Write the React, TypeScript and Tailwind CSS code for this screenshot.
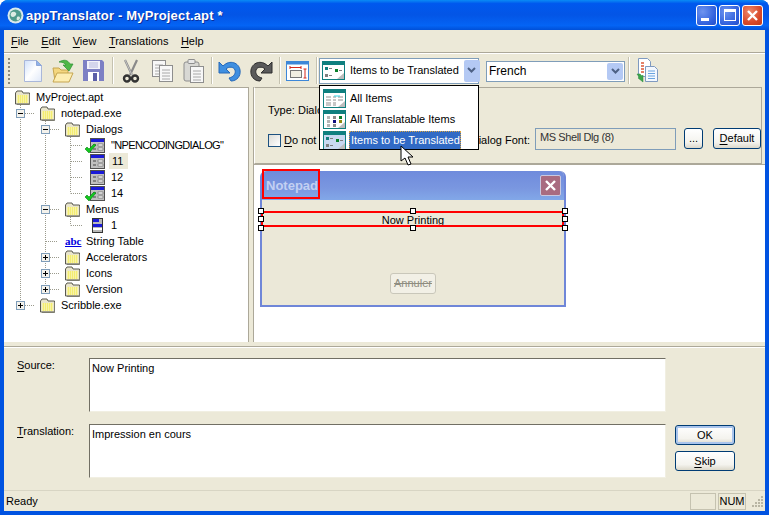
import type { ReactNode } from "react"

const ui = "font-['Liberation_Sans',Arial,sans-serif] text-[11px] leading-none text-black"

function Doc() {
  return (
    <svg width="18" height="22" viewBox="0 0 18 22">
      <defs>
        <linearGradient id="docFill" x1="0" y1="0" x2="1" y2="1">
          <stop offset="0" stopColor="#cfe0fb" />
          <stop offset="0.5" stopColor="#ffffff" />
          <stop offset="1" stopColor="#dfe8f8" />
        </linearGradient>
      </defs>
      <path d="M.5.5h12l5 5v16H.5z" fill="url(#docFill)" stroke="#a9b7da" />
      <path d="M12.5.5v5h5z" fill="#8fb3ea" stroke="#8ea6d8" />
    </svg>
  )
}

function OpenFolder() {
  return (
    <svg width="22" height="24" viewBox="0 0 22 24">
      <path d="M1 9h6l2 2h7v11H3z" fill="#f4d77f" stroke="#c5a550" />
      <path d="M1 23l4-9h16l-4 9z" fill="#fdeeb2" stroke="#c5a550" />
      <path d="M7 3c5-3 9-2 11 2h3l-4 7-6-6h3c-1-2-4-3-7-3z" fill="#4fb848" stroke="#2e8f36" strokeWidth=".7" />
    </svg>
  )
}

function Disk() {
  return (
    <svg width="21" height="21" viewBox="0 0 21 21">
      <path d="M0 0h19l2 2v19H0z" fill="#7d80c4" />
      <rect x="4" y="1" width="13" height="8" fill="#f2f2fa" />
      <path d="M6 3h9M6 5h9M6 7h9" stroke="#b6b8de" />
      <rect x="5" y="12" width="11" height="9" fill="#ffffff" />
      <rect x="10" y="13" width="4" height="8" fill="#5c5fa8" />
    </svg>
  )
}

function Scissors() {
  return (
    <svg width="18" height="24" viewBox="0 0 18 24" fill="none">
      <path d="M3 1l7 15M15 1L8 16" stroke="#8a8a8a" strokeWidth="2.2" />
      <path d="M3 1l7 15" stroke="#d0d0d0" strokeWidth=".8" />
      <circle cx="5" cy="19.5" r="3" stroke="#333" strokeWidth="2.4" />
      <circle cx="13" cy="19.5" r="3" stroke="#333" strokeWidth="2.4" />
    </svg>
  )
}

function Sheet({ x, y, w, h }: { x: number; y: number; w: number; h: number }) {
  return (
    <g>
      <rect x={x + 0.5} y={y + 0.5} width={w} height={h} fill="#f7f7f7" stroke="#8e8e8e" />
      <path
        d={`M${x + 3} ${y + 5}h${w - 5}M${x + 3} ${y + 8}h${w - 5}M${x + 3} ${y + 11}h${w - 5}M${x + 3} ${y + 14}h${w - 5}`}
        stroke="#a8a8a8"
      />
    </g>
  )
}

function Copy() {
  return (
    <svg width="21" height="22" viewBox="0 0 21 22">
      <Sheet x={0} y={0} w={13} h={16} />
      <Sheet x={7} y={5} w={13} h={16} />
    </svg>
  )
}

function Paste() {
  return (
    <svg width="21" height="24" viewBox="0 0 21 24">
      <rect x="1" y="3" width="15" height="19" rx="2" fill="#d8d8d4" stroke="#8e8e8e" />
      <rect x="5" y="0.5" width="7" height="4" rx="1" fill="#e8e8e8" stroke="#8e8e8e" />
      <Sheet x={7} y={7} w={13} h={16} />
    </svg>
  )
}

function Curl({ color, edge, flip }: { color: string; edge: string; flip?: boolean }) {
  return (
    <svg width="23" height="22" viewBox="0 0 23 22" className={flip ? "-scale-x-100" : ""}>
      <path
        d="M1 2v11h11l-4-4c3-3 8-2 9 1 1 3-1 7-6 8l2 3c6 0 10-5 9-11C21 3 12-1 5 6z"
        fill={color}
        stroke={edge}
        strokeWidth="1"
      />
    </svg>
  )
}

function Resize() {
  return (
    <svg width="23" height="20" viewBox="0 0 23 20">
      <rect x=".5" y=".5" width="22" height="19" fill="#fff" stroke="#3d87d8" />
      <rect x="1" y="1" width="21" height="2.5" fill="#3d87d8" />
      <rect x="4.5" y="9.5" width="11" height="7" fill="#f2efe2" stroke="#777" />
      <path d="M4 6.5h11M4 5v3M15 5v3M19 8v9M17.5 8h3M17.5 17h3" stroke="#d4281c" fill="none" />
    </svg>
  )
}

function Transfer() {
  return (
    <svg width="23" height="25" viewBox="0 0 23 25">
      <path d="M2.5.5h9l3 3v15h-12z" fill="#fff" stroke="#7f9ac0" />
      <path d="M5 5h3M5 8h3M5 11h3M5 14h3" stroke="#dc5a38" strokeWidth="1.6" />
      <path d="M9.5 8.5h9l3 3v12h-12z" fill="#f3f8ff" stroke="#7f9ac0" />
      <path d="M12 13h7M12 15.5h7M12 18h7M12 20.5h7" stroke="#69a4df" />
      <path d="M7 24l-5-4 1-1-2-3h3l2 2 1-1z" fill="#3ca64a" stroke="#2f8a3c" strokeWidth=".5" />
    </svg>
  )
}

function ViewIcon({ kind, active }: { kind: "all" | "translatable" | "todo"; active?: boolean }) {
  const paper = active ? "#c9d8f0" : "#ffffff"
  return (
    <svg width="23" height="19" viewBox="0 0 23 19" className="shrink-0">
      <rect x=".5" y=".5" width="22" height="18" fill={paper} stroke="#0f7f7f" />
      <rect x="1" y="1" width="21" height="3" fill="#0f7f7f" />
      <path d="M22 12v6h-7z" fill="#bdbdbd" />
      {kind === "todo" && (
        <g>
          <rect x="3" y="6" width="3" height="3" fill="#127f7f" />
          <rect x="7" y="7" width="3" height="1" fill="#7f7f7f" />
          <rect x="13" y="8" width="3" height="3" fill="#0a7f2a" />
          <rect x="17" y="9" width="3" height="1" fill="#7f7f7f" />
          <rect x="3" y="13" width="3" height="3" fill="#7f7f7f" />
          <rect x="7" y="14" width="3" height="1" fill="#7f7f7f" />
        </g>
      )}
      {kind === "all" && (
        <g>
          <path d="M3 8h5M10 8h3M15 8h5M3 11h5M10 11h3M15 11h5M3 14h5M10 14h3M3 16h5M10 16h3" stroke="#8f8f8f" />
          <path d="M11 7h6" stroke="#35d5e8" />
        </g>
      )}
      {kind === "translatable" && (
        <g>
          <rect x="4" y="6" width="3" height="3" fill="#b5b5b5" />
          <rect x="10" y="6" width="3" height="3" fill="#8a8a8a" />
          <rect x="16" y="6" width="3" height="3" fill="#0a7f2a" />
          <rect x="4" y="10" width="3" height="3" fill="#b5b5b5" />
          <rect x="10" y="10" width="3" height="3" fill="#101080" />
          <rect x="16" y="10" width="3" height="3" fill="#8f8a10" />
          <rect x="4" y="14" width="3" height="3" fill="#b5b5b5" />
          <rect x="10" y="14" width="3" height="3" fill="#8a8a8a" />
        </g>
      )}
    </svg>
  )
}

function Underlined({ text }: { text: string }) {
  return (
    <>
      <span className="underline underline-offset-2">{text[0]}</span>
      {text.slice(1)}
    </>
  )
}

function ToolSep() {
  return <span className="mx-[4px] block h-[27px] w-[2px] shrink-0 border-r border-white bg-[#c5c2b0]" />
}

function ComboArrow({ size }: { size: string }) {
  return (
    <span className={`flex shrink-0 items-center justify-center rounded-[2px] bg-[#b4c9f4] ${size}`}>
      <svg width="9" height="7" viewBox="0 0 9 7">
        <path d="M1 1l3.5 3.5L8 1" stroke="#4d6185" strokeWidth="2" fill="none" />
      </svg>
    </span>
  )
}

function XpButton({ children, className }: { children: ReactNode; className: string }) {
  return (
    <button
      className={`flex items-center justify-center rounded-[3px] border border-[#003c74] bg-[linear-gradient(#ffffff,#f4f3ee_70%,#dcd8ca)] ${ui} ${className}`}
    >
      {children}
    </button>
  )
}

function CaptionButton({ red, children }: { red?: boolean; children: ReactNode }) {
  return (
    <span
      className={`flex h-[21px] w-[21px] items-center justify-center rounded-[3px] border border-white ${
        red
          ? "bg-[radial-gradient(circle_at_35%_30%,#ee8a6c,#d8492a_60%,#c03a18)]"
          : "bg-[radial-gradient(circle_at_30%_30%,#6d93ef,#2f5fdc_70%,#2350c8)]"
      }`}
    >
      {children}
    </span>
  )
}

type Guide = "pipe" | "branch" | "last" | "plus" | "minus" | "plusLast" | "blank"

function TreeGuide({ kind }: { kind: Guide }) {
  const box = kind === "plus" || kind === "minus" || kind === "plusLast"
  const dots = { stroke: "#9a9a8c", strokeDasharray: "1 1", fill: "none" }
  return (
    <svg width="25" height="16" viewBox="0 0 25 16" className="shrink-0">
      {kind === "pipe" && <path d="M5.5 0v16" {...dots} />}
      {kind === "branch" && <path d="M5.5 0v16M6 8.5h12" {...dots} />}
      {kind === "last" && <path d="M5.5 0v8.5M6 8.5h12" {...dots} />}
      {box && (
        <g>
          {kind === "plus" || kind === "minus" ? <path d="M5.5 0v16" {...dots} /> : <path d="M5.5 0v4" {...dots} />}
          <path d="M10 8.5h9" {...dots} />
          <rect x="1.5" y="4.5" width="8" height="8" fill="#f4f2ec" stroke="#7f9db9" />
          <path d="M3 8.5h5" stroke="#000" />
          {kind !== "minus" && <path d="M5.5 6v5" stroke="#000" />}
        </g>
      )}
    </svg>
  )
}

function TreeFolder() {
  return (
    <svg width="15" height="15" viewBox="0 0 15 15" className="shrink-0">
      <path d="M.5 14V3l1.5-2h5l1 2h6.5v11z" fill="#e9e5cc" stroke="#5a5a50" />
      <rect x="2" y="5" width="11" height="8" fill="#f3ec72" />
      <path d="M2 6h11M2 8h11M2 10h11M2 12h11" stroke="#fbfadc" strokeDasharray="1 1" />
      <path d="M14.5 4v10.5H2" stroke="#7c7c70" fill="none" />
    </svg>
  )
}

function DialogIcon({ checked }: { checked?: boolean }) {
  return (
    <span className="relative flex h-[15px] w-[15px] shrink-0">
      <svg width="15" height="15" viewBox="0 0 15 15">
        <rect x=".5" y=".5" width="14" height="14" fill="#c0c0c0" stroke="#505050" />
        <rect x="1" y="1" width="13" height="3" fill="#1a1ad8" />
        <rect x="8" y="6" width="5" height="2" fill="#fff" stroke="#444" strokeWidth=".5" />
        <rect x="8" y="10" width="5" height="2" fill="#fff" stroke="#444" strokeWidth=".5" />
        <path d="M3 7h3M3 11h3" stroke="#444" />
      </svg>
      {checked && (
        <svg width="13" height="11" viewBox="0 0 13 11" className="absolute -left-[6px] top-[5px]">
          <path d="M1 6l4 4 7-8-2-1-5 5-2-2z" fill="#12c81e" stroke="#0a7a12" strokeWidth=".6" />
        </svg>
      )}
    </span>
  )
}

function MenuIcon() {
  return (
    <svg width="15" height="15" viewBox="0 0 15 15" className="shrink-0">
      <rect x="2.5" y=".5" width="10" height="14" fill="#b8b8b8" stroke="#333" />
      <rect x="3" y="1" width="6" height="3" fill="#1a1ad8" />
      <rect x="3" y="6" width="9" height="3" fill="#1a1ad8" />
      <rect x="3" y="10" width="9" height="2" fill="#fff" />
    </svg>
  )
}

const abc = "font-['Liberation_Serif',serif] text-[11px] leading-none font-bold text-[#0000e0] underline"

const rows: { guides: Guide[]; icon: ReactNode; label: string; active?: boolean; tight?: boolean }[] = [
  { guides: [], icon: <TreeFolder />, label: "MyProject.apt" },
  { guides: ["minus"], icon: <TreeFolder />, label: "notepad.exe" },
  { guides: ["pipe", "minus"], icon: <TreeFolder />, label: "Dialogs" },
  { guides: ["pipe", "pipe", "branch"], icon: <DialogIcon checked />, label: '"NPENCODINGDIALOG"', tight: true },
  { guides: ["pipe", "pipe", "branch"], icon: <DialogIcon />, label: "11", active: true },
  { guides: ["pipe", "pipe", "branch"], icon: <DialogIcon />, label: "12" },
  { guides: ["pipe", "pipe", "last"], icon: <DialogIcon checked />, label: "14" },
  { guides: ["pipe", "minus"], icon: <TreeFolder />, label: "Menus" },
  { guides: ["pipe", "pipe", "last"], icon: <MenuIcon />, label: "1" },
  { guides: ["pipe", "branch"], icon: <span className={`w-[15px] shrink-0 ${abc}`}>abc</span>, label: "String Table" },
  { guides: ["pipe", "plus"], icon: <TreeFolder />, label: "Accelerators" },
  { guides: ["pipe", "plus"], icon: <TreeFolder />, label: "Icons" },
  { guides: ["pipe", "plusLast"], icon: <TreeFolder />, label: "Version" },
  { guides: ["plusLast"], icon: <TreeFolder />, label: "Scribble.exe" },
]

function Handle({ className }: { className: string }) {
  return <span className={`absolute h-[6px] w-[6px] border border-black bg-white ${className}`} />
}

function ViewMenuItem({ kind, label, active }: { kind: "all" | "translatable" | "todo"; label: string; active?: boolean }) {
  return (
    <div className="flex h-[21px] items-center gap-[3px] pl-[3px]">
      <ViewIcon kind={kind} active={active} />
      <span
        className={
          active
            ? "flex h-[20px] w-[112px] items-center border border-dotted border-[#d9a441] bg-[#316ac5] pl-px text-white"
            : "flex h-[20px] items-center pl-px"
        }
      >
        {label}
      </span>
    </div>
  )
}

export default function App() {
  return (
    <div className={`flex h-[515px] w-[769px] flex-col overflow-hidden rounded-t-[8px] bg-[#0053e1] ${ui}`}>
      {/* title bar */}
      <div className="flex h-[30px] shrink-0 items-center bg-[linear-gradient(#0a8bf5,#0058ee_12%,#0355e6_50%,#0464f5_85%,#0050d8)] pl-[7px] pr-[6px]">
        <svg width="17" height="17" viewBox="0 0 17 17" className="shrink-0">
          <circle cx="8.5" cy="8.5" r="8" fill="#d9e9ee" />
          <circle cx="8.5" cy="8.5" r="6" fill="#4f9a8c" />
          <path d="M4 6c2-2 4-1 5 0s-1 4-3 4-3-2-2-4zM10 10c2-1 3 0 3 1s-2 3-3 2 0-2 0-3z" fill="#dcebe3" />
        </svg>
        <span className="ml-[2px] text-[13px] font-bold tracking-[0.17px] text-white [text-shadow:1px_1px_#0a2f9c]">
          appTranslator - MyProject.apt *
        </span>
        <div className="ml-auto flex gap-[2px]">
          <CaptionButton>
            <span className="mt-[9px] mr-[4px] h-[3px] w-[8px] bg-white" />
          </CaptionButton>
          <CaptionButton>
            <span className="h-[12px] w-[12px] border border-t-[3px] border-white" />
          </CaptionButton>
          <CaptionButton red>
            <svg width="13" height="13" viewBox="0 0 13 13">
              <path d="M2 2l9 9M11 2l-9 9" stroke="#fff" strokeWidth="2.4" />
            </svg>
          </CaptionButton>
        </div>
      </div>

      <div className="relative mx-[4px] mb-[4px] flex min-h-0 flex-1 flex-col bg-[#ece9d8]">
        {/* menu */}
        <div className="flex h-[22px] shrink-0 items-center gap-[12.5px] pl-[7px]">
          {["File", "Edit", "View", "Translations", "Help"].map((m) => (
            <span key={m}>
              <Underlined text={m} />
            </span>
          ))}
        </div>

        {/* toolbar */}
        <div className="flex h-[35px] shrink-0 items-center border-t border-[#aca899] pt-px shadow-[inset_0_1px_#fff]">
          <span className="ml-[4px] mr-[14px] h-[26px] w-[2px] shrink-0 bg-[repeating-linear-gradient(#8c8a7c_0_2px,transparent_2px_4px)]" />
          <span className="mr-[10px]"><Doc /></span>
          <span className="mr-[9px]"><OpenFolder /></span>
          <Disk />
          <span className="ml-[4px]"><ToolSep /></span>
          <span className="ml-[4px]"><Scissors /></span>
          <span className="ml-[12px]"><Copy /></span>
          <span className="ml-[10px]"><Paste /></span>
          <span className="ml-[3px]"><ToolSep /></span>
          <span className="ml-[1px]"><Curl color="#3f8fe0" edge="#2668b8" /></span>
          <span className="ml-[9px]"><Curl color="#5a5a5a" edge="#2d2d2d" flip /></span>
          <span className="ml-[2px]"><ToolSep /></span>
          <span className="ml-[1px]"><Resize /></span>
          <span className="ml-[3px]"><ToolSep /></span>
          <div className="ml-[-3px] flex h-[26px] w-[160px] shrink-0 items-center gap-[5px] border border-[#7f9db9] bg-white pl-[2px] pr-px">
            <ViewIcon kind="todo" />
            <span className="flex-1 whitespace-nowrap">Items to be Translated</span>
            <ComboArrow size="h-[22px] w-[16px]" />
          </div>
          <div className="ml-[7px] mt-px flex h-[21px] w-[139px] shrink-0 items-center border border-[#7f9db9] bg-white pl-[2px] pr-px">
            <span className="flex-1 text-[12px]">French</span>
            <ComboArrow size="h-[17px] w-[16px]" />
          </div>
          <span className="ml-[-1px]"><ToolSep /></span>
          <span className="ml-[2px]"><Transfer /></span>
        </div>

        {/* tree + editor */}
        <div className="flex h-[255px] shrink-0 gap-[4px]">
          <div className="w-[245px] shrink-0 border-t border-r border-[#aca899] bg-white pl-[11px] pt-px">
            {rows.map((r) => (
              <div key={r.label} className="flex h-[16px] items-center">
                {r.guides.map((g, i) => (
                  <TreeGuide key={i} kind={g} />
                ))}
                {r.icon}
                <span
                  className={`ml-[4px] flex h-[16px] items-center whitespace-nowrap pl-[2px] ${
                    r.active ? "bg-[#ece9d8] pl-[3px] pr-[5px]" : "pr-[2px]"
                  } ${r.tight ? "tracking-[-0.65px]" : ""}`}
                >
                  {r.label}
                </span>
              </div>
            ))}
          </div>

          <div className="flex min-w-0 flex-1 flex-col border-l border-[#aca899]">
            <div className="mr-[3px] flex h-[77px] shrink-0 flex-col border border-t-[#aca899] border-r-[#aca899] border-b-[#aca899] border-l-white pl-[13px]">
              <span className="mt-[17px]">Type: Dialog</span>
              <div className="mt-[11px] flex h-[23px] items-center">
                <span className="mt-[3px] h-[13px] w-[13px] shrink-0 border border-[#1c5180] bg-[linear-gradient(135deg,#dcdcd7,#ffffff)]" />
                <span className="ml-[3px] mt-[3px] w-[187px] whitespace-nowrap">
                  <Underlined text="Do not" />
                </span>
                <span className="mt-[3px] whitespace-nowrap">Dialog Font:</span>
                <span className="ml-[5px] flex h-[22px] w-[141px] shrink-0 items-center border border-[#7f9db9] pb-[2px] pl-[4px] tracking-[-0.4px] text-[#333]">
                  MS Shell Dlg (8)
                </span>
                <XpButton className="ml-[8px] h-[21px] w-[19px] shrink-0">...</XpButton>
                <XpButton className="ml-[10px] h-[21px] w-[48px] shrink-0">
                  <Underlined text="Default" />
                </XpButton>
              </div>
            </div>
            <div className="min-h-0 flex-1 border-t border-[#aca899] bg-white pl-[6px] pt-[6px]">
              {/* edited dialog */}
              <div className="relative flex h-[136px] w-[306px] flex-col rounded-t-[6px] border-x-[2px] border-b-[2px] border-[#6f86d8] bg-[#ebe8d8]">
                <div className="flex h-[29px] shrink-0 items-center justify-between rounded-t-[5px] bg-[linear-gradient(#6f8bdc,#7a97e0_60%,#82a8e8)] pl-[4px] pr-[3px]">
                  <span className="text-[13px] font-bold text-[#c3d0f2]">Notepad</span>
                  <span className="flex h-[21px] w-[21px] items-center justify-center rounded-[2px] border border-[#c8c8e0] bg-[#a96b80]">
                    <svg width="13" height="13" viewBox="0 0 13 13">
                      <path d="M2 2l9 9M11 2l-9 9" stroke="#fff" strokeWidth="2.4" />
                    </svg>
                  </span>
                </div>
                <div className="mt-[13px] flex h-[15px] shrink-0 items-center justify-center">
                  <span>Now Printing</span>
                </div>
                <div className="mt-[45px] flex justify-center">
                  <span className="flex h-[21px] w-[46px] items-center justify-center rounded-[3px] border border-[#c9c7ba] bg-[#f2f0e6] text-[#8f8d80] line-through">
                    Annuler
                  </span>
                </div>
                {/* selection marks */}
                <span className="absolute -top-[2px] left-0 h-[30px] w-[58px] border-[2px] border-[#ff0000]" />
                <span className="absolute left-[-1px] top-[40px] h-[16px] w-[303px] border-[2px] border-[#ff0000]" />
                <Handle className="left-[-4px] top-[37px]" />
                <Handle className="left-[148px] top-[37px]" />
                <Handle className="left-[300px] top-[37px]" />
                <Handle className="left-[-4px] top-[45px]" />
                <Handle className="left-[300px] top-[45px]" />
                <Handle className="left-[-4px] top-[54px]" />
                <Handle className="left-[148px] top-[54px]" />
                <Handle className="left-[300px] top-[54px]" />
              </div>
            </div>
          </div>
        </div>

        {/* source / translation */}
        <div className="flex min-h-0 flex-1 flex-col">
          <div className="mt-[4px] h-[2px] shrink-0 border-t border-[#aca899] bg-white" />
          <div className="mt-[10px] flex h-[54px] items-start">
            <span className="ml-[13px] mt-[2px] w-[72px]"><Underlined text="Source:" /></span>
            <div className="h-full w-[577px] border border-[#716f64] border-r-[#f1efe2] border-b-[#f1efe2] bg-white pl-[2px] pt-[4px]">
              Now Printing
            </div>
          </div>
          <div className="mt-[12px] flex h-[54px] items-start">
            <span className="ml-[13px] mt-[2px] w-[72px]"><Underlined text="Translation:" /></span>
            <div className="h-full w-[577px] border border-[#716f64] border-r-[#f1efe2] border-b-[#f1efe2] bg-white pl-[2px] pt-[4px]">
              Impression en cours
            </div>
            <div className="ml-[9px] mt-[1px] flex flex-col gap-[6px]">
              <XpButton className="h-[20px] w-[60px] shadow-[inset_0_0_0_2px_#a9c4ec]">OK</XpButton>
              <XpButton className="h-[20px] w-[60px]">
                <Underlined text="Skip" />
              </XpButton>
            </div>
          </div>
        </div>

        {/* status bar */}
        <div className="flex h-[21px] shrink-0 items-center border-t border-[#d8d5c4] pl-[2px]">
          <span>Ready</span>
          <div className="ml-auto flex items-center gap-[2px]">
            <span className="h-[17px] w-[26px] border border-[#c5c2b0]" />
            <span className="flex h-[17px] w-[28px] items-center justify-center border border-[#c5c2b0]">NUM</span>
            <svg width="17" height="17" viewBox="0 0 17 17" className="shrink-0">
              <path d="M13 4h2M10 7h2M13 7h2M7 10h2M10 10h2M13 10h2M4 13h2M7 13h2M10 13h2M13 13h2" stroke="#b8b5a3" strokeWidth="2" />
            </svg>
          </div>
        </div>

        {/* open combo list */}
        <div className="absolute left-[315px] top-[55px] h-[65px] w-[160px] overflow-hidden border border-black bg-white pt-[2px]">
          <ViewMenuItem kind="all" label="All Items" />
          <ViewMenuItem kind="translatable" label="All Translatable Items" />
          <ViewMenuItem kind="todo" label="Items to be Translated" active />
        </div>

        {/* mouse pointer */}
        <svg width="14" height="21" viewBox="0 0 14 21" className="absolute left-[396px] top-[115px]">
          <path d="M1 1v15l4-3 3 7 3-1-3-7h5z" fill="#fff" stroke="#000" />
        </svg>
      </div>
    </div>
  )
}
